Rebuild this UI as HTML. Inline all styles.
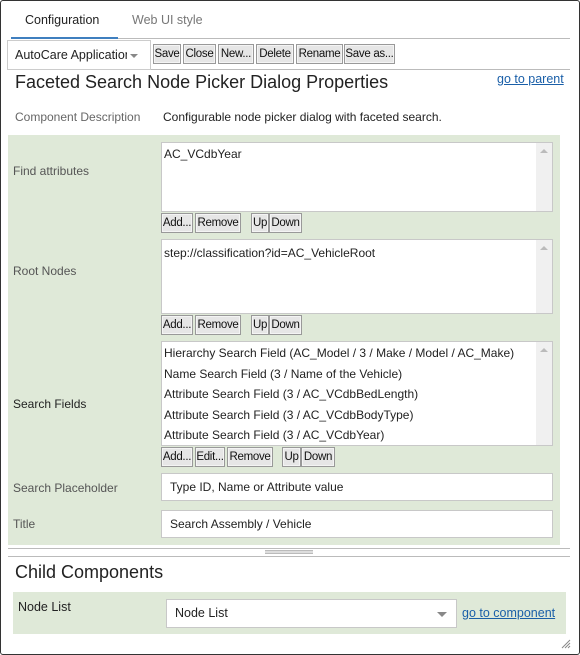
<!DOCTYPE html>
<html><head><style>
*{box-sizing:border-box;margin:0;padding:0}
body{width:580px;height:655px;background:#fff;font-family:"Liberation Sans",sans-serif;font-size:12px;color:#222;position:relative;overflow:hidden}
.a{position:absolute}
.frame{left:0;top:0;width:580px;height:655px;border:1px solid #333;border-radius:3px}
.btn{position:absolute;height:20px;background:#e6e6e6;border:1px solid #999;font-size:11.5px;line-height:18px;text-align:center;color:#111;box-shadow:inset 0 0 0 1px #f4f4f4;letter-spacing:-0.3px}
.ta{position:absolute;left:161px;width:392px;background:#fff;border:1px solid #c8c8c8}
.sb{position:absolute;right:0;top:0;bottom:0;width:16px;background:#f0f0f0}
.sb:before{content:"";position:absolute;left:4px;top:6px;border-left:4px solid transparent;border-right:4px solid transparent;border-bottom:4px solid #bbb}
.lbl{position:absolute;left:13px;color:#555;font-size:12px}
.inp{position:absolute;left:161px;width:392px;height:28px;background:#fff;border:1px solid #c8c8c8;padding-left:8px;line-height:26px;font-size:12px}
.line{font-size:12px;line-height:20.5px;padding-left:2px;white-space:nowrap}
a{color:#1a5fa8;text-decoration:underline}
</style></head><body>
<div class="a frame"></div>
<div class="a" style="left:25px;top:13px;font-size:12.5px;color:#222">Configuration</div>
<div class="a" style="left:132px;top:13px;font-size:12.5px;color:#777">Web UI style</div>
<div class="a" style="left:11px;top:37px;width:107px;height:2px;background:#3f7fbf"></div>
<div class="a" style="left:118px;top:38px;width:452px;height:1px;background:#bbb"></div>
<div class="a" style="left:7px;top:40px;width:144px;height:30px;border:1px solid #ccc;background:#fff"></div>
<div class="a" style="left:15px;top:48px;font-size:12.5px;width:112px;overflow:hidden;white-space:nowrap">AutoCare Application</div>
<div class="a" style="left:130px;top:54px;border-left:4px solid transparent;border-right:4px solid transparent;border-top:4px solid #888"></div>
<div class="btn" style="left:153px;top:44px;width:28px">Save</div>
<div class="btn" style="left:183px;top:44px;width:33px">Close</div>
<div class="btn" style="left:218px;top:44px;width:36px">New...</div>
<div class="btn" style="left:256px;top:44px;width:38px">Delete</div>
<div class="btn" style="left:296px;top:44px;width:47px">Rename</div>
<div class="btn" style="left:344px;top:44px;width:51px">Save as...</div>
<div class="a" style="left:151px;top:69px;width:419px;height:1px;background:#bbb"></div>
<div class="a" style="left:15px;top:72px;font-size:18px;color:#222">Faceted Search Node Picker Dialog Properties</div>
<div class="a" style="left:497px;top:72px;font-size:12.5px"><a>go to parent</a></div>
<div class="a" style="left:15px;top:110px;color:#666">Component Description</div>
<div class="a" style="left:163px;top:110px;color:#222">Configurable node picker dialog with faceted search.</div>

<div class="a" style="left:8px;top:135px;width:552px;height:410px;background:#dfe9d8"></div>
<div class="lbl" style="top:164px">Find attributes</div>
<div class="ta" style="top:142px;height:70px"><div class="line" style="padding-top:2px;line-height:18px">AC_VCdbYear</div><div class="sb"></div></div>
<div class="btn" style="left:161px;top:213px;width:32px">Add...</div>
<div class="btn" style="left:195px;top:213px;width:46px">Remove</div>
<div class="btn" style="left:251px;top:213px;width:18px">Up</div>
<div class="btn" style="left:269px;top:213px;width:33px">Down</div>

<div class="lbl" style="top:264px">Root Nodes</div>
<div class="ta" style="top:239px;height:75px"><div class="line" style="padding-top:4px;line-height:18px">step://classification?id=AC_VehicleRoot</div><div class="sb"></div></div>
<div class="btn" style="left:161px;top:315px;width:32px">Add...</div>
<div class="btn" style="left:195px;top:315px;width:46px">Remove</div>
<div class="btn" style="left:251px;top:315px;width:18px">Up</div>
<div class="btn" style="left:269px;top:315px;width:33px">Down</div>

<div class="lbl" style="top:397px;color:#222">Search Fields</div>
<div class="ta" style="top:341px;height:105px;overflow:hidden"><div style="padding-top:1px">
<div class="line">Hierarchy Search Field (AC_Model / 3 / Make / Model / AC_Make)</div>
<div class="line">Name Search Field (3 / Name of the Vehicle)</div>
<div class="line">Attribute Search Field (3 / AC_VCdbBedLength)</div>
<div class="line">Attribute Search Field (3 / AC_VCdbBodyType)</div>
<div class="line">Attribute Search Field (3 / AC_VCdbYear)</div></div><div class="sb"></div></div>
<div class="btn" style="left:161px;top:447px;width:32px">Add...</div>
<div class="btn" style="left:195px;top:447px;width:30px">Edit...</div>
<div class="btn" style="left:227px;top:447px;width:46px">Remove</div>
<div class="btn" style="left:282px;top:447px;width:19px">Up</div>
<div class="btn" style="left:301px;top:447px;width:34px">Down</div>

<div class="lbl" style="top:481px">Search Placeholder</div>
<div class="inp" style="top:473px">Type ID, Name or Attribute value</div>
<div class="lbl" style="top:517px">Title</div>
<div class="inp" style="top:510px">Search Assembly / Vehicle</div>

<div class="a" style="left:8px;top:548px;width:562px;height:1px;background:#bbb"></div>
<div class="a" style="left:265px;top:550px;width:48px;height:4px;border-top:1px solid #bbb;border-bottom:1px solid #bbb;background:#ddd"></div>
<div class="a" style="left:8px;top:556px;width:562px;height:1px;background:#bbb"></div>
<div class="a" style="left:15px;top:562px;font-size:18px;color:#222">Child Components</div>
<div class="a" style="left:13px;top:592px;width:553px;height:42px;background:#dfe9d8"></div>
<div class="a" style="left:18px;top:600px;font-size:12.5px;color:#222">Node List</div>
<div class="a" style="left:166px;top:599px;width:291px;height:29px;border:1px solid #c8c8c8;background:#fff;padding-left:8px;line-height:27px;font-size:12.5px">Node List</div>
<div class="a" style="left:437px;top:612px;border-left:5px solid transparent;border-right:5px solid transparent;border-top:5px solid #888"></div>
<div class="a" style="left:462px;top:606px;font-size:12.5px"><a>go to component</a></div>
<svg class="a" style="left:561px;top:639px" width="10" height="10"><path d="M9 1L1 9M9 4L4 9M9 7L7 9" stroke="#888" stroke-width="1"/></svg>
</body></html>
